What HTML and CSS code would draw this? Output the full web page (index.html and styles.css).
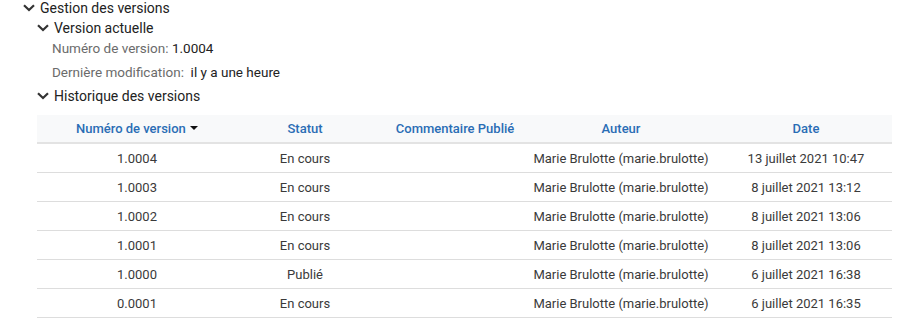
FILE: index.html
```html
<!DOCTYPE html>
<html lang="fr">
<head>
<meta charset="utf-8">
<link rel="stylesheet" href="styles.css">
</head>
<body>
<section class="section">
  <div class="head head-main">
    <svg class="chev" viewBox="0 0 12 8"><path d="M1 1.2 L6 6 L11 1.2" /></svg>
    <span>Gestion des versions</span>
  </div>
  <div class="sub">
    <div class="head head-sub">
      <svg class="chev" viewBox="0 0 12 8"><path d="M1 1.2 L6 6 L11 1.2" /></svg>
      <span>Version actuelle</span>
    </div>
    <div class="props">
      <div class="prop"><span class="lbl">Numéro de version:</span> <span class="val">1.0004</span></div>
      <div class="prop"><span class="lbl">Dernière modification:</span>&nbsp; <span class="val">il y a une heure</span></div>
    </div>
    <div class="head head-sub">
      <svg class="chev" viewBox="0 0 12 8"><path d="M1 1.2 L6 6 L11 1.2" /></svg>
      <span>Historique des versions</span>
    </div>
    <table class="grid">
      <colgroup>
        <col class="c1"><col class="c2"><col class="c3"><col class="c4"><col class="c5">
      </colgroup>
      <thead>
        <tr>
          <th>Numéro de version <span class="sort"></span></th>
          <th>Statut</th>
          <th class="comment">Commentaire Publié</th>
          <th>Auteur</th>
          <th class="date">Date</th>
        </tr>
      </thead>
      <tbody>
        <tr><td>1.0004</td><td>En cours</td><td class="comment"></td><td>Marie Brulotte (marie.brulotte)</td><td class="date">13 juillet 2021 10:47</td></tr>
        <tr><td>1.0003</td><td>En cours</td><td class="comment"></td><td>Marie Brulotte (marie.brulotte)</td><td class="date">8 juillet 2021 13:12</td></tr>
        <tr><td>1.0002</td><td>En cours</td><td class="comment"></td><td>Marie Brulotte (marie.brulotte)</td><td class="date">8 juillet 2021 13:06</td></tr>
        <tr><td>1.0001</td><td>En cours</td><td class="comment"></td><td>Marie Brulotte (marie.brulotte)</td><td class="date">8 juillet 2021 13:06</td></tr>
        <tr><td>1.0000</td><td>Publié</td><td class="comment"></td><td>Marie Brulotte (marie.brulotte)</td><td class="date">6 juillet 2021 16:38</td></tr>
        <tr><td>0.0001</td><td>En cours</td><td class="comment"></td><td>Marie Brulotte (marie.brulotte)</td><td class="date">6 juillet 2021 16:35</td></tr>
      </tbody>
    </table>
  </div>
</section>
</body>
</html>
```
FILE: styles.css
```css
html, body {
  margin: 0;
  padding: 0;
  background: #ffffff;
}
body {
  font-family: Roboto, "Liberation Sans", sans-serif;
  color: #333333;
}
.section {
  padding: 0 15px 0 23px;
}
.head {
  display: flex;
  align-items: center;
  gap: 5px;
  font-size: 14px;
  color: #222222;
  line-height: 16px;
}
.head-main {
  height: 16px;
}
.chev {
  width: 12px;
  height: 8px;
  flex: none;
}
.chev path {
  fill: none;
  stroke: #333333;
  stroke-width: 2.2;
}
.sub {
  padding-left: 14px;
}
.head-sub {
  margin-top: 4px;
}
.props {
  padding-left: 15px;
  padding-top: 0;
}
.prop {
  font-size: 13.5px;
  line-height: 24px;
}
.lbl {
  color: #6b6b6b;
}
.val {
  color: #222222;
}
.grid {
  margin-top: 11px;
  width: 855px;
  border-collapse: collapse;
  table-layout: fixed;
  font-size: 13px;
}
.c1 { width: 200px; }
.c2 { width: 136px; }
.c3 { width: 157px; }
.c4 { width: 182px; }
.c5 { width: 180px; }
.grid th {
  background: #f8f9fa;
  color: #2a6db5;
  font-weight: 500;
  height: 27px;
  padding: 0;
  text-align: center;
  white-space: nowrap;
  border-bottom: 2px solid #e3e3e3;
}
.grid td {
  height: 28px;
  padding: 0;
  text-align: center;
  white-space: nowrap;
  border-bottom: 1px solid #dddddd;
  color: #3a3a3a;
}
.grid .comment {
  padding-left: 7px;
}
.grid .date {
  padding-left: 8px;
}
.sort {
  display: inline-block;
  width: 0;
  height: 0;
  border-left: 4px solid transparent;
  border-right: 4px solid transparent;
  border-top: 4px solid #111111;
  vertical-align: 3px;
  margin-left: 1px;
}
```
